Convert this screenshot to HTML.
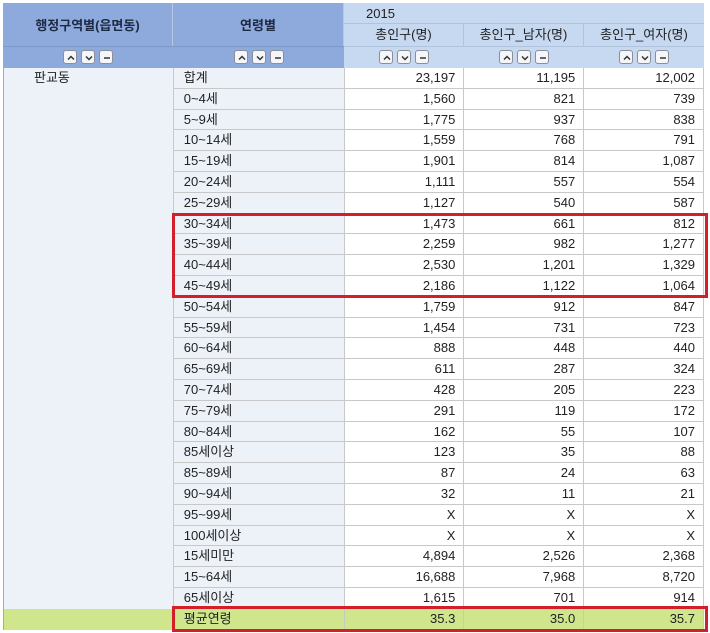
<!DOCTYPE html>
<html><head><meta charset="utf-8"><style>
*{margin:0;padding:0;box-sizing:border-box}
body{width:710px;height:633px;background:#fff;font-family:"Liberation Sans","Noto Sans CJK KR",sans-serif;font-size:13px;color:#222;position:relative;overflow:hidden}
.a{position:absolute}
.hd{background:#8eaadc;font-weight:bold;display:flex;align-items:center;justify-content:center;font-size:13px;color:#1d2a44}
.hl{background:#c6d9f1}
.btns{display:flex;justify-content:center;align-items:center;gap:4px;height:100%}
.b{width:14px;height:14px;border:1px solid #8a8f99;border-radius:3px;background:#f4f6f9;position:relative}
.b svg{position:absolute;left:1px;top:1px}
#body{position:absolute;left:3px;top:68px;width:701px}
.r{display:flex;height:20.8px}
.r div{border-bottom:1px solid #c8c8c8;border-right:1px solid #c8c8c8;line-height:20px;white-space:nowrap}
.c1{width:170px;background:#edf2f9;border-bottom:none!important;padding-left:30px}
.c2{width:171px;background:#edf2f9;padding-left:10px}
.n{width:120px;text-align:right;padding-right:8px}
.g div{background:#cfe68c!important}
</style></head><body>
<div class="a" style="left:3px;top:3px;width:701px;height:65px;border-left:1px solid #aaa;"></div>
<div class="a hd" style="left:3px;top:3px;width:170px;height:43px;border-right:1px solid #b8c8e4">행정구역별(읍면동)</div>
<div class="a hd" style="left:173px;top:3px;width:171px;height:43px;border-right:1px solid #b8c8e4">연령별</div>
<div class="a hl" style="left:344px;top:3px;width:360px;height:21px;border-bottom:1px solid #b0c4e0;padding-left:22px;line-height:22px">2015</div>
<div class="a hl" style="left:344px;top:24px;width:120px;height:22px;text-align:center;line-height:22px;border-right:1px solid #b0c4e0">총인구(명)</div>
<div class="a hl" style="left:464px;top:24px;width:120px;height:22px;text-align:center;line-height:22px;border-right:1px solid #b0c4e0">총인구_남자(명)</div>
<div class="a hl" style="left:584px;top:24px;width:120px;height:22px;text-align:center;line-height:22px">총인구_여자(명)</div>
<div class="a" style="left:3px;top:46px;width:341px;height:22px;background:#8eaadc;border-top:1px solid #7c98c8"></div>
<div class="a" style="left:344px;top:46px;width:360px;height:22px;background:#c6d9f1;border-top:1px solid #b0c4e0"></div>
<div class="a" style="left:3px;top:46px;width:170px;height:22px"><div class="btns"><div class="b"><svg width="12" height="12"><path d="M3 7.5L6 4.5L9 7.5" stroke="#333" stroke-width="1.5" fill="none"/></svg></div><div class="b"><svg width="12" height="12"><path d="M3 4.5L6 7.5L9 4.5" stroke="#333" stroke-width="1.5" fill="none"/></svg></div><div class="b"><svg width="12" height="12"><path d="M3 6H9" stroke="#333" stroke-width="1.5"/></svg></div></div></div>
<div class="a" style="left:173px;top:46px;width:171px;height:22px"><div class="btns"><div class="b"><svg width="12" height="12"><path d="M3 7.5L6 4.5L9 7.5" stroke="#333" stroke-width="1.5" fill="none"/></svg></div><div class="b"><svg width="12" height="12"><path d="M3 4.5L6 7.5L9 4.5" stroke="#333" stroke-width="1.5" fill="none"/></svg></div><div class="b"><svg width="12" height="12"><path d="M3 6H9" stroke="#333" stroke-width="1.5"/></svg></div></div></div>
<div class="a" style="left:344px;top:46px;width:120px;height:22px"><div class="btns"><div class="b"><svg width="12" height="12"><path d="M3 7.5L6 4.5L9 7.5" stroke="#333" stroke-width="1.5" fill="none"/></svg></div><div class="b"><svg width="12" height="12"><path d="M3 4.5L6 7.5L9 4.5" stroke="#333" stroke-width="1.5" fill="none"/></svg></div><div class="b"><svg width="12" height="12"><path d="M3 6H9" stroke="#333" stroke-width="1.5"/></svg></div></div></div>
<div class="a" style="left:464px;top:46px;width:120px;height:22px"><div class="btns"><div class="b"><svg width="12" height="12"><path d="M3 7.5L6 4.5L9 7.5" stroke="#333" stroke-width="1.5" fill="none"/></svg></div><div class="b"><svg width="12" height="12"><path d="M3 4.5L6 7.5L9 4.5" stroke="#333" stroke-width="1.5" fill="none"/></svg></div><div class="b"><svg width="12" height="12"><path d="M3 6H9" stroke="#333" stroke-width="1.5"/></svg></div></div></div>
<div class="a" style="left:584px;top:46px;width:120px;height:22px"><div class="btns"><div class="b"><svg width="12" height="12"><path d="M3 7.5L6 4.5L9 7.5" stroke="#333" stroke-width="1.5" fill="none"/></svg></div><div class="b"><svg width="12" height="12"><path d="M3 4.5L6 7.5L9 4.5" stroke="#333" stroke-width="1.5" fill="none"/></svg></div><div class="b"><svg width="12" height="12"><path d="M3 6H9" stroke="#333" stroke-width="1.5"/></svg></div></div></div>
<div id="body" style="border-left:1px solid #aaa">
<div class="r"><div class="c1">판교동</div><div class="c2">합계</div><div class="n">23,197</div><div class="n">11,195</div><div class="n">12,002</div></div>
<div class="r"><div class="c1"></div><div class="c2">0~4세</div><div class="n">1,560</div><div class="n">821</div><div class="n">739</div></div>
<div class="r"><div class="c1"></div><div class="c2">5~9세</div><div class="n">1,775</div><div class="n">937</div><div class="n">838</div></div>
<div class="r"><div class="c1"></div><div class="c2">10~14세</div><div class="n">1,559</div><div class="n">768</div><div class="n">791</div></div>
<div class="r"><div class="c1"></div><div class="c2">15~19세</div><div class="n">1,901</div><div class="n">814</div><div class="n">1,087</div></div>
<div class="r"><div class="c1"></div><div class="c2">20~24세</div><div class="n">1,111</div><div class="n">557</div><div class="n">554</div></div>
<div class="r"><div class="c1"></div><div class="c2">25~29세</div><div class="n">1,127</div><div class="n">540</div><div class="n">587</div></div>
<div class="r"><div class="c1"></div><div class="c2">30~34세</div><div class="n">1,473</div><div class="n">661</div><div class="n">812</div></div>
<div class="r"><div class="c1"></div><div class="c2">35~39세</div><div class="n">2,259</div><div class="n">982</div><div class="n">1,277</div></div>
<div class="r"><div class="c1"></div><div class="c2">40~44세</div><div class="n">2,530</div><div class="n">1,201</div><div class="n">1,329</div></div>
<div class="r"><div class="c1"></div><div class="c2">45~49세</div><div class="n">2,186</div><div class="n">1,122</div><div class="n">1,064</div></div>
<div class="r"><div class="c1"></div><div class="c2">50~54세</div><div class="n">1,759</div><div class="n">912</div><div class="n">847</div></div>
<div class="r"><div class="c1"></div><div class="c2">55~59세</div><div class="n">1,454</div><div class="n">731</div><div class="n">723</div></div>
<div class="r"><div class="c1"></div><div class="c2">60~64세</div><div class="n">888</div><div class="n">448</div><div class="n">440</div></div>
<div class="r"><div class="c1"></div><div class="c2">65~69세</div><div class="n">611</div><div class="n">287</div><div class="n">324</div></div>
<div class="r"><div class="c1"></div><div class="c2">70~74세</div><div class="n">428</div><div class="n">205</div><div class="n">223</div></div>
<div class="r"><div class="c1"></div><div class="c2">75~79세</div><div class="n">291</div><div class="n">119</div><div class="n">172</div></div>
<div class="r"><div class="c1"></div><div class="c2">80~84세</div><div class="n">162</div><div class="n">55</div><div class="n">107</div></div>
<div class="r"><div class="c1"></div><div class="c2">85세이상</div><div class="n">123</div><div class="n">35</div><div class="n">88</div></div>
<div class="r"><div class="c1"></div><div class="c2">85~89세</div><div class="n">87</div><div class="n">24</div><div class="n">63</div></div>
<div class="r"><div class="c1"></div><div class="c2">90~94세</div><div class="n">32</div><div class="n">11</div><div class="n">21</div></div>
<div class="r"><div class="c1"></div><div class="c2">95~99세</div><div class="n">X</div><div class="n">X</div><div class="n">X</div></div>
<div class="r"><div class="c1"></div><div class="c2">100세이상</div><div class="n">X</div><div class="n">X</div><div class="n">X</div></div>
<div class="r"><div class="c1"></div><div class="c2">15세미만</div><div class="n">4,894</div><div class="n">2,526</div><div class="n">2,368</div></div>
<div class="r"><div class="c1"></div><div class="c2">15~64세</div><div class="n">16,688</div><div class="n">7,968</div><div class="n">8,720</div></div>
<div class="r"><div class="c1"></div><div class="c2">65세이상</div><div class="n">1,615</div><div class="n">701</div><div class="n">914</div></div>
<div class="r g"><div class="c1"></div><div class="c2">평균연령</div><div class="n">35.3</div><div class="n">35.0</div><div class="n">35.7</div></div>
</div>
<div class="a" style="left:172px;top:213px;width:536px;height:85px;border:3px solid #d2202a"></div>
<div class="a" style="left:172px;top:606px;width:536px;height:26px;border:3px solid #d2202a"></div>
</body></html>
